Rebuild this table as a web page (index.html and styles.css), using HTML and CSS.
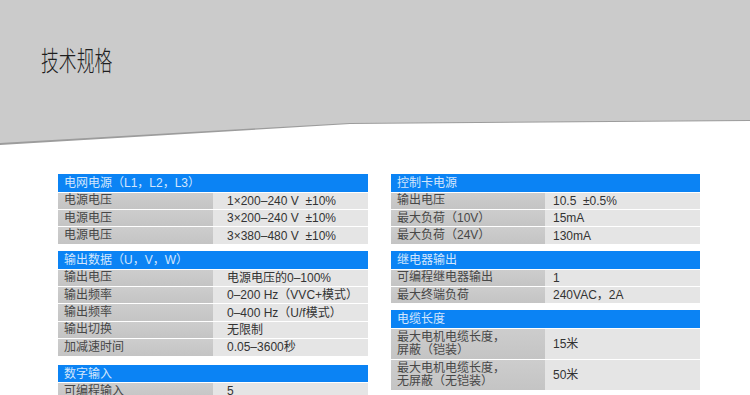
FILE: index.html
```html
<!DOCTYPE html>
<html lang="zh">
<head>
<meta charset="utf-8">
<title>技术规格</title>
<link rel="stylesheet" href="styles.css">
</head>
<body>
<header class="band">
  <div class="band-fill">
    <h1 class="title">技术规格</h1>
  </div>
</header>
<main class="specs">
  <div class="col col-left">
    <section class="table">
      <div class="thead">电网电源（L1，L2，L3）</div>
      <div class="row"><div class="lab">电源电压</div><div class="val">1×200–240 V&nbsp; ±10%</div></div>
      <div class="row"><div class="lab">电源电压</div><div class="val">3×200–240 V&nbsp; ±10%</div></div>
      <div class="row"><div class="lab">电源电压</div><div class="val">3×380–480 V&nbsp; ±10%</div></div>
    </section>
    <section class="table">
      <div class="thead">输出数据（U，V，W）</div>
      <div class="row"><div class="lab">输出电压</div><div class="val">电源电压的0–100%</div></div>
      <div class="row"><div class="lab">输出频率</div><div class="val">0–200 Hz（VVC+模式）</div></div>
      <div class="row"><div class="lab">输出频率</div><div class="val">0–400 Hz（U/f模式）</div></div>
      <div class="row"><div class="lab">输出切换</div><div class="val">无限制</div></div>
      <div class="row"><div class="lab">加减速时间</div><div class="val">0.05–3600秒</div></div>
    </section>
    <section class="table table-far">
      <div class="thead">数字输入</div>
      <div class="row"><div class="lab">可编程输入</div><div class="val">5</div></div>
    </section>
  </div>
  <div class="col col-right">
    <section class="table">
      <div class="thead">控制卡电源</div>
      <div class="row"><div class="lab">输出电压</div><div class="val">10.5&nbsp; ±0.5%</div></div>
      <div class="row"><div class="lab">最大负荷（10V）</div><div class="val">15mA</div></div>
      <div class="row"><div class="lab">最大负荷（24V）</div><div class="val">130mA</div></div>
    </section>
    <section class="table">
      <div class="thead">继电器输出</div>
      <div class="row"><div class="lab">可编程继电器输出</div><div class="val">1</div></div>
      <div class="row"><div class="lab">最大终端负荷</div><div class="val">240VAC，2A</div></div>
    </section>
    <section class="table">
      <div class="thead">电缆长度</div>
      <div class="row row-tall"><div class="lab">最大电机电缆长度，<br>屏蔽（铠装）</div><div class="val">15米</div></div>
      <div class="row row-tall"><div class="lab">最大电机电缆长度，<br>无屏蔽（无铠装）</div><div class="val">50米</div></div>
    </section>
  </div>
</main>
</body>
</html>
```

FILE: styles.css
```css
html, body {
  margin: 0;
  padding: 0;
  overflow: hidden;
  background: #ffffff;
}

body {
  width: 750px;
  height: 395px;
  font-family: "Liberation Sans", "Noto Sans CJK SC", sans-serif;
  color: #3a3a3a;
}

.band {
  height: 145px;
  background: #9c9c9c;
  clip-path: polygon(0 0, 750px 0, 750px 121px, 350px 124px, 0 145px);
}

.band-fill {
  height: 144px;
  background: #cbcbcb;
  clip-path: polygon(0 0, 750px 0, 750px 120px, 350px 123px, 0 143px);
  padding-top: 42px;
  padding-left: 41px;
  box-sizing: border-box;
}

.title {
  margin: 0;
  font-family: "Noto Sans CJK SC", sans-serif;
  font-weight: 300;
  font-size: 27px;
  line-height: 36px;
  color: #1e1e1e;
  transform: scaleX(0.66);
  transform-origin: left center;
  letter-spacing: 0;
}

.specs {
  display: flex;
  gap: 23px;
  padding-top: 29px;
  padding-left: 58px;
}

.col {
  display: flex;
  flex-direction: column;
  gap: 7px;
}

.col-left { width: 310px; }
.col-right { width: 309px; }

.table {
  display: flex;
  flex-direction: column;
  gap: 1px;
}

.table-far { margin-top: 2px; }

.thead {
  height: 17.7px;
  background: #0b83f4;
  color: #d3e6fd;
  font-size: 12px;
  line-height: 18px;
  padding-left: 6px;
}

.row {
  display: flex;
  height: 16.4px;
  font-size: 12px;
  line-height: 16px;
}

.row-tall { height: 30px; }

.lab {
  width: 155px;
  flex: none;
  background: linear-gradient(#cdcdcd, #c4c4c4);
  color: #474747;
  padding-left: 6px;
  box-sizing: border-box;
  display: flex;
  align-items: center;
  line-height: 13px;
}

.val {
  flex: 1;
  background: #e5e5e5;
  color: #333333;
  padding-left: 14px;
  display: flex;
  align-items: center;
  white-space: nowrap;
  overflow: hidden;
}

.col-right .lab { width: 154px; }
.col-right .val { padding-left: 8px; }
```
